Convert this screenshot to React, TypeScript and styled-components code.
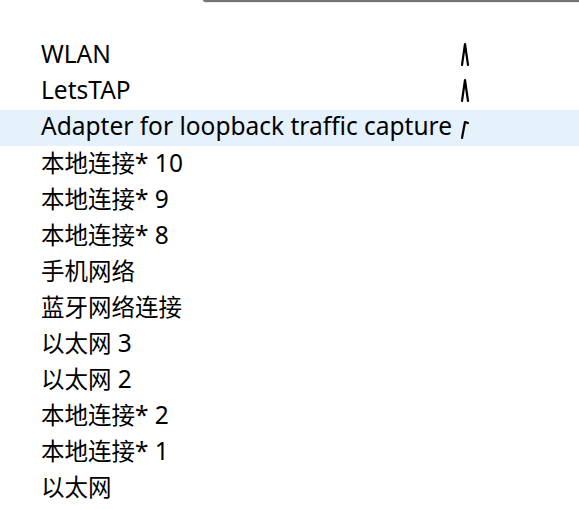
import React from 'react';
import styled, { createGlobalStyle } from 'styled-components';

const GlobalStyle = createGlobalStyle`
  html, body {
    margin: 0;
    padding: 0;
    background: #ffffff;
  }
  body {
    font-family: "Noto Sans", "Noto Sans CJK SC", sans-serif;
    color: #000000;
  }
`;

const Page = styled.div`
  width: 579px;
  height: 509px;
  overflow: hidden;
  display: flex;
  flex-direction: column;
`;

// bottom edge of the popup that sits above the list
const TopEdge = styled.div`
  margin-left: 203px;
  height: 2px;
  background: #747474;
  border-bottom-left-radius: 2px;
  box-shadow: 0 1px 0 rgba(0, 0, 0, 0.08);
`;

const List = styled.div`
  margin-top: 36px;
  display: grid;
  grid-template-columns: max-content 1fr;
`;

const Row = styled.div<{ $selected?: boolean }>`
  grid-column: 1 / -1;
  display: grid;
  grid-template-columns: subgrid;
  align-items: center;
  height: 36px;
  background: ${(p) => (p.$selected ? '#e5f1fb' : 'transparent')};
`;

const Name = styled.div`
  padding-left: 41px;
  padding-right: 8px;
  padding-bottom: 4px;
  font-size: 24.5px;
  line-height: 32px;
  white-space: nowrap;
`;

const Cjk = styled.span`
  font-family: "Noto Sans CJK SC", sans-serif;
  font-size: 23.5px;
`;

const Spark = styled.svg`
  display: block;
  width: 12px;
  height: 36px;
`;

type Iface = { name: string; spark?: string };

const ifaces: Iface[] = [
  { name: 'WLAN', spark: 'M2 27 L5 6 L8 27' },
  { name: 'LetsTAP', spark: 'M2 27 L5 6 L8 27' },
  { name: 'Adapter for loopback traffic capture', spark: 'M2 28 L5 12 L8 13' },
  { name: '本地连接* 10' },
  { name: '本地连接* 9' },
  { name: '本地连接* 8' },
  { name: '手机网络' },
  { name: '蓝牙网络连接' },
  { name: '以太网 3' },
  { name: '以太网 2' },
  { name: '本地连接* 2' },
  { name: '本地连接* 1' },
  { name: '以太网' },
];

const splitCjk = (text: string) =>
  text.split(/([\u4e00-\u9fff]+)/).filter(Boolean).map((part, i) =>
    /[\u4e00-\u9fff]/.test(part) ? <Cjk key={i}>{part}</Cjk> : <span key={i}>{part}</span>);

export default function App() {
  return (
    <>
      <GlobalStyle />
      <Page>
        <TopEdge />
        <List>
          {ifaces.map((iface, index) =>
            <Row key={iface.name} $selected={index === 2}>
              <Name>{splitCjk(iface.name)}</Name>
              {iface.spark
                ? <Spark viewBox="0 0 12 36">
                  <path d={iface.spark} fill="none" stroke="#000" strokeWidth="2.2"
                    strokeLinejoin="round" strokeLinecap="round" />
                </Spark>
                : <span />}
            </Row>)}
        </List>
      </Page>
    </>
  );
}
